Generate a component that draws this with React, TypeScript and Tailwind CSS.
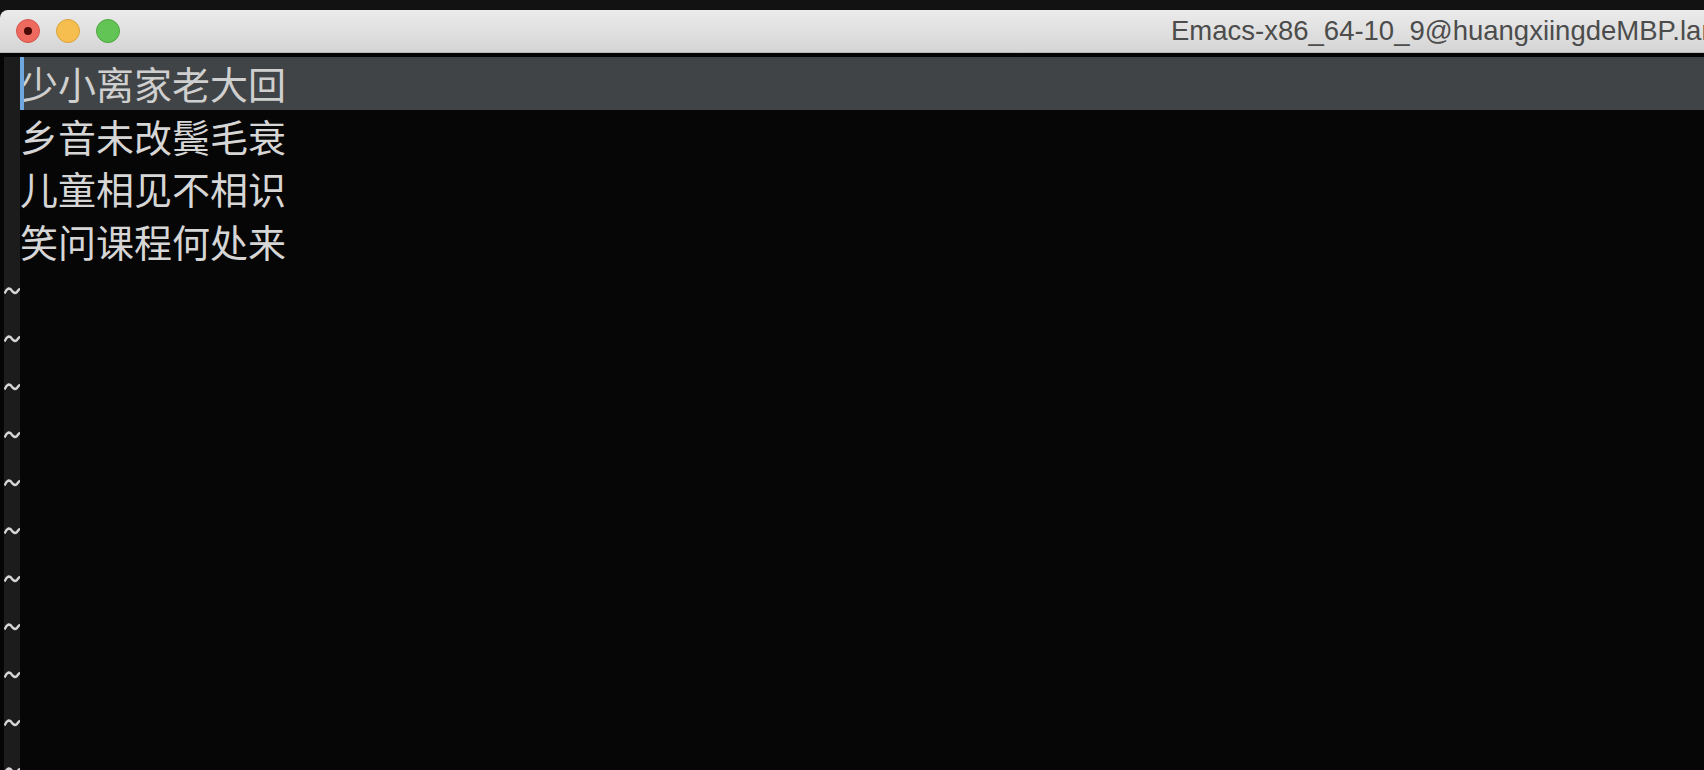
import React from "react";

const lines = ["少小离家老大回", "乡音未改鬓毛衰", "儿童相见不相识", "笑问课程何处来"];

const Tilde = () => (
  <svg width="16" height="8" viewBox="0 0 16 8" className="block">
    <path
      d="M0.5 6.5 L2.5 3 L4.5 1.5 L6.5 2 L8.5 4.5 L10.5 6 L12.5 5.5 L14.5 3 L16 1.5"
      fill="none"
      stroke="#d6d6d6"
      strokeWidth="2.4"
      strokeLinejoin="round"
    />
  </svg>
);

const TrafficLights = () => (
  <div className="flex items-center gap-[16px] pl-[16px]">
    <div className="w-[24px] h-[24px] rounded-full bg-[#ee6a5f] border border-[#d4544a] flex items-center justify-center">
      <div className="w-[8px] h-[8px] rounded-full bg-[#4a0a06]" />
    </div>
    <div className="w-[24px] h-[24px] rounded-full bg-[#f6be4f] border border-[#dca33a]" />
    <div className="w-[24px] h-[24px] rounded-full bg-[#61c454] border border-[#4ea73f]" />
  </div>
);

export default function App() {
  const empties = Array.from({ length: 11 });

  return (
    <div className="w-[1704px] h-[770px] overflow-hidden bg-[#121212] flex flex-col">
      <div className="h-[10px] shrink-0 bg-[#121212]" />

      {/* title bar */}
      <div className="h-[43px] shrink-0 flex items-center rounded-tl-[8px] bg-gradient-to-b from-[#ebebeb] to-[#d5d5d5] border-b border-[#b9b9b9] relative">
        <TrafficLights />
        <div
          className="absolute left-[1171px] top-0 h-full flex items-center whitespace-nowrap text-[27.5px] text-[#4c4c4c]"
          style={{ fontFamily: '"Liberation Sans", Arial, sans-serif' }}
        >
          Emacs-x86_64-10_9@huangxiingdeMBP.lan
        </div>
      </div>

      <div className="h-[4px] shrink-0 bg-[#050505]" />

      {/* buffer */}
      <div
        className="flex-1 flex flex-col bg-[#060606]"
        style={{ fontFamily: '"Noto Sans CJK SC", "Noto Sans", sans-serif' }}
      >
        {lines.map((line, i) => (
          <div key={i} className="flex h-[52.5px] shrink-0">
            <div className="w-[20px] shrink-0 border-l-4 border-[#050505] bg-[#1c1c1c]" />
            <div
              className={`relative flex-1 flex items-center text-[38px] leading-[52.5px] whitespace-nowrap ${
                i === 0 ? "bg-[#404446] text-[#cfcfcf]" : "text-[#d6d6d6]"
              }`}
            >
              {i === 0 && <div className="absolute left-0 top-0 w-[4px] h-full bg-[#6fa8e0]" />}
              {line}
            </div>
          </div>
        ))}
        {empties.map((_, i) => (
          <div key={i} className="flex h-[48px] shrink-0">
            <div className="w-[20px] shrink-0 border-l-4 border-[#050505] bg-[#1c1c1c] flex items-center">
              <Tilde />
            </div>
            <div className="flex-1" />
          </div>
        ))}
      </div>
    </div>
  );
}
